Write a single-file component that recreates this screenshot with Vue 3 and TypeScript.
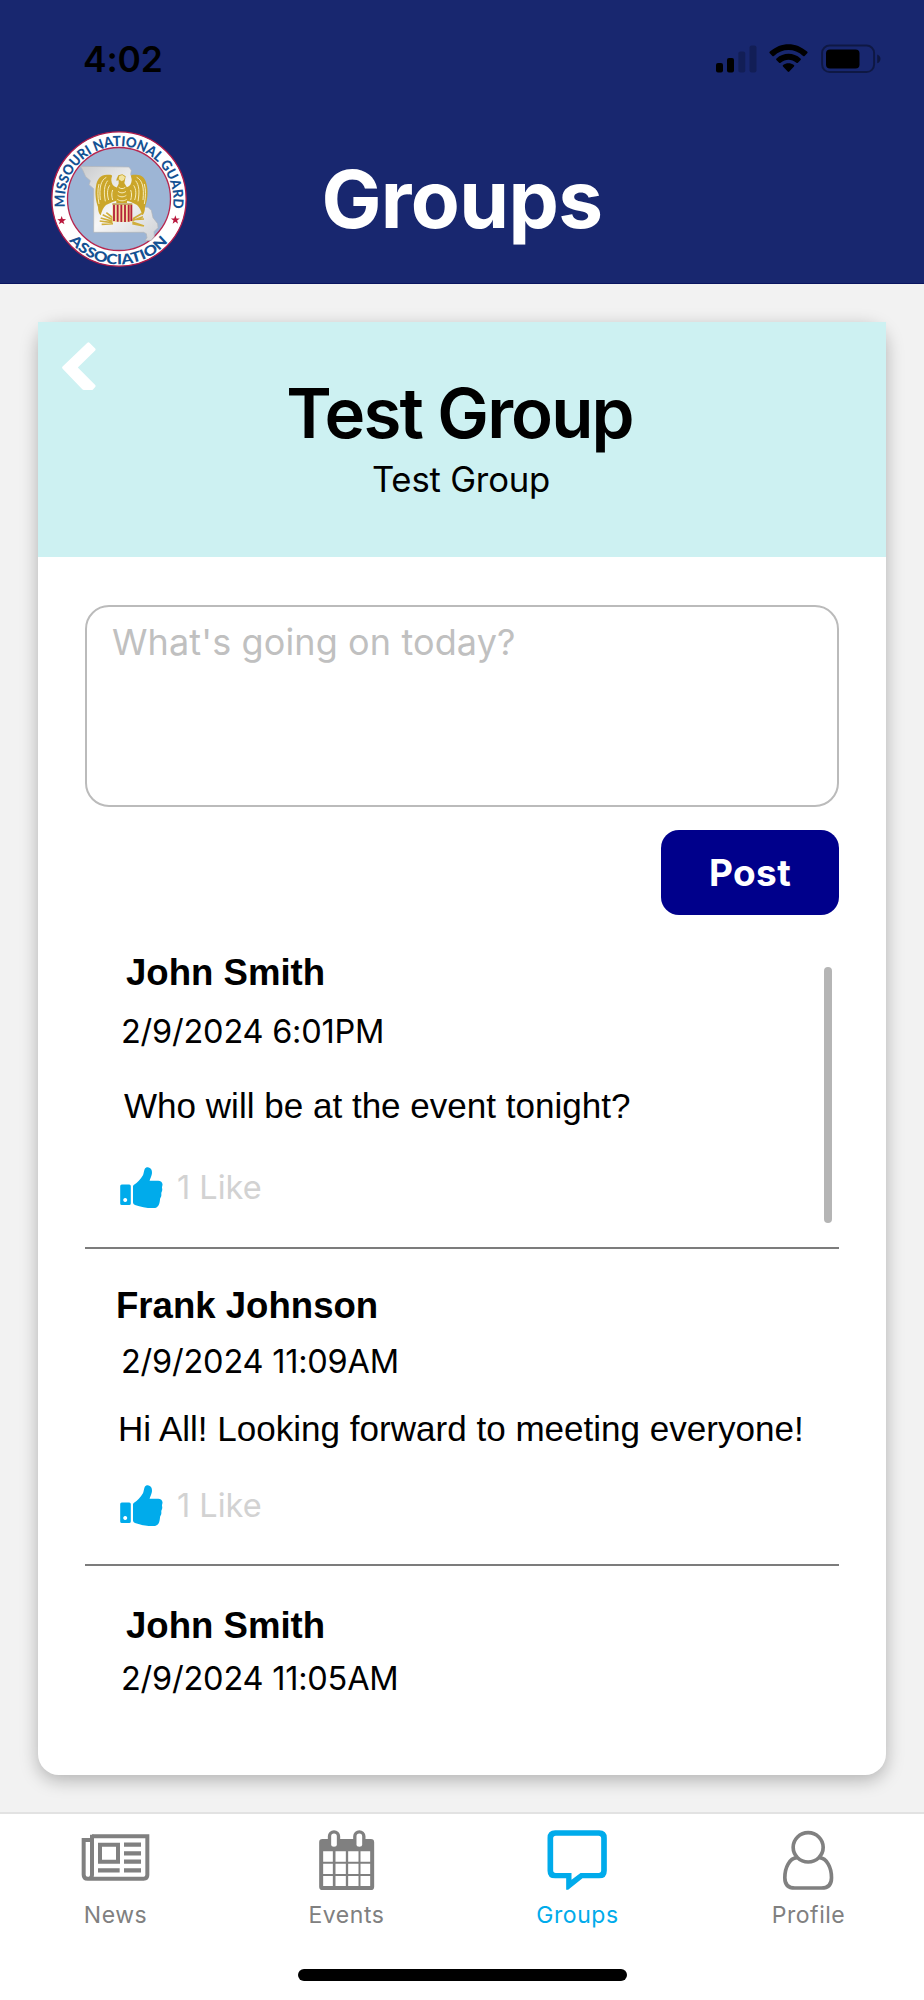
<script setup lang="ts">
import { ref } from 'vue'

interface Post {
	id: number
	author: string
	date: string
	message?: string
	likes?: number
}

const draft = ref<string>('')
const activeTab = ref<string>('Groups')

const posts = ref<Post[]>([
	{ id: 1, author: 'John Smith', date: '2/9/2024 6:01PM', message: 'Who will be at the event tonight?', likes: 1 },
	{ id: 2, author: 'Frank Johnson', date: '2/9/2024 11:09AM', message: 'Hi All! Looking forward to meeting everyone!', likes: 1 },
	{ id: 3, author: 'John Smith', date: '2/9/2024 11:05AM' },
])

const tabs = ['News', 'Events', 'Groups', 'Profile']
</script>

<template>
	<div class="screen">
		<header class="header">
			<div class="status-bar">
				<span class="time">4:02</span>
				<div class="status-icons">
					<svg class="signal" width="41" height="30" viewBox="0 0 41 30">
						<rect x="0" y="19" width="7" height="9.5" rx="2" />
						<rect x="11" y="14" width="7" height="14.5" rx="2" />
						<rect x="22.3" y="7.5" width="7" height="21" rx="2" opacity=".22" />
						<rect x="33.5" y="1.5" width="7" height="27" rx="2" opacity=".22" />
					</svg>
					<svg class="wifi" width="39" height="30" viewBox="0 0 39 30">
						<path d="M0.8 9.3Q0 8.4 .9 7.6C12-2.3 27-2.3 38.1 7.6q.9.8.1 1.7l-2.6 2.6q-.7.7-1.5 0C25.5 4 13.5 4 4.9 11.9q-.8.7-1.5 0z" />
						<path d="M7.4 16Q6.6 15.2 7.5 14.4C14.5 8.3 24.5 8.3 31.5 14.4q.9.8.1 1.6l-2.7 2.7q-.7.7-1.5 0C22.5 14.8 16.5 14.8 11.6 18.7q-.8.7-1.5 0z" />
						<path d="M14 22.6q-.8-.8.1-1.5c3.2-2.4 7.6-2.4 10.8 0q.9.7.1 1.5l-4.7 4.9q-.8.8-1.6 0z" />
					</svg>
					<svg class="battery" width="60" height="30" viewBox="0 0 60 30">
						<rect x="1.1" y="1.6" width="52" height="26.5" rx="7.5" fill="none" stroke="#000" stroke-width="2" opacity=".38" />
						<rect x="5" y="5.4" width="33.5" height="19" rx="4" />
						<path d="M56.2 10.6c4.4 1.2 4.4 7.4 0 8.6z" opacity=".42" />
					</svg>
				</div>
			</div>
			<div class="title-bar">
				<svg class="logo" width="138" height="138" viewBox="31 28 414 414">
					<defs>
						<path id="arc-top" d="M76.3 260A163 163 0 1 1 399.700 260" />
						<path id="arc-bottom" d="M88 360A194 194 0 0 0 388 360" />
						<linearGradient id="state" x1="0" y1="0" x2="1" y2="1">
							<stop offset="0" stop-color="#c9cbcd" />
							<stop offset=".5" stop-color="#f7f7f7" />
							<stop offset="1" stop-color="#cfd2d6" />
						</linearGradient>
					</defs>
					<circle cx="238" cy="235" r="201.5" fill="#fff" stroke="#b01c4a" stroke-width="4" />
					<circle cx="238" cy="235" r="154.5" fill="#9db5d5" stroke="#b5264f" stroke-width="4" />
					<text class="logo-text"><textPath href="#arc-top" textLength="556" lengthAdjust="spacingAndGlyphs">MISSOURI NATIONAL GUARD</textPath></text>
					<text class="logo-text"><textPath href="#arc-bottom" textLength="338" lengthAdjust="spacingAndGlyphs">ASSOCIATION</textPath></text>
					<g fill="#b8173c">
						<path d="M66 286l3.300 9.300 9.900.3-7.900 6 2.900 9.500-8.200-5.700-8.200 5.700 2.900-9.500-7.900-6 9.900-.3z" />
						<path d="M407 284l3.300 9.300 9.900.3-7.900 6 2.900 9.500-8.200-5.700-8.200 5.700 2.900-9.500-7.900-6 9.900-.3z" />
					</g>
					<!-- state outline -->
					<path d="M122 137L268 139l7 10-2 12 8 22 12 50 15 26 17 1 10 9 5 22 14 18 1 12-12 12 1 14-9 12-19 1 6-9-2-12-8-4H162V204l-14-12 4-12-14-12-8-18z" fill="url(#state)" stroke="#b0b4b8" stroke-width="2" />
					<!-- eagle -->
					<g fill="#cba62a">
						<path d="M204 162c-20-1-32 12-35 35-4 22 0 46 6 62 0 12 3 20 8 25 4-14 8-24 16-31l20-9 18-6 3-28c-5-12-16-10-21-18-5-9-5-17-2-25 2-5-5-5-13-5z" />
						<path d="M288 162c20-1 31 12 34 35 4 22 0 46-6 62 0 12-3 20-8 25-4-14-8-24-16-31l-18-9-20-6-3-28c5-12 16-10 21-18 5-9 5-17 2-25-2-5 6-5 14-5z" />
						<path d="M231 174l5-10 12-3 10 6-2 11-2 9 12 20-4 40h-32l-2-40 9-18v-10l-7 1z" />
					</g>
					<g fill="none" stroke="#f6ecbc" stroke-width="3">
						<path d="M200 170c-16 8-22 30-18 68M204 180c-11 14-12 35-7 62M210 194c-8 12-8 28-3 44M178 190c-5 18-4 38 0 60M291 170c17 8 23 30 19 68M288 180c11 14 12 35 7 62M282 194c8 12 8 28 3 44M314 190c5 18 4 38 0 60M219 208c-4 10-3 20 0 30M273 208c4 10 3 20 0 30" />
						<path d="M237 200c6 5 14 5 20 0M235 212c7 6 17 6 24 0M234 224c8 6 18 6 26 0M233 236c8 6 20 6 28 0" />
					</g>
					<path d="M239 166l9-3 8 6-3 9-7 4-9-6z" fill="#f1e3a0" />
					<g fill="none" stroke="#d0ae3c" stroke-width="5">
						<path d="M183 292l36 10M180 301l38 5M186 311l34-2M189 282l32 16M278 304l35 12M278 309l30 6M278 300l32-12M280 294l28-16M200 276l20 16M277 297l36-2" />
					</g>
					<rect x="218" y="249" width="60" height="55" rx="4" fill="#f4e0a4" />
					<path d="M223 252v49M234 252v51M245 252v52M256 252v52M267 252v51M275 252v49" stroke="#b5213a" stroke-width="5.5" />
					<path d="M218 250h60" stroke="#9a7726" stroke-width="3" />
				</svg>
				<h1 class="title">Groups</h1>
			</div>
		</header>

		<main class="card">
			<div class="group-header">
				<button class="back" aria-label="Back">
					<svg width="34" height="49" viewBox="0 0 34 49">
						<path d="M25.4 .8Q26.4-.2 27.4 .8L33.2 6.5Q34 7.3 33.2 8.4L15.8 25.4 33.2 43Q34 44 33.2 45L31 47.5Q30.4 48 29.5 48H22Q21 48 20.3 47.2L.6 26.8Q-.4 25.5 .6 24.4Z" fill="#fff" />
					</svg>
				</button>
				<h2 class="group-name">Test Group</h2>
				<p class="group-description">Test Group</p>
			</div>

			<div class="group-body">
				<textarea v-model="draft" class="composer" placeholder="What's going on today?"></textarea>
				<button class="post-button">Post</button>

				<div class="posts">
					<article v-for="post in posts" :key="post.id" class="post">
						<h3 class="author">{{ post.author }}</h3>
						<p class="date">{{ post.date }}</p>
						<p v-if="post.message" class="message">{{ post.message }}</p>
						<div v-if="post.likes" class="likes">
							<svg width="43" height="42" viewBox="0 0 43 42">
								<path d="M1.8 17.5h7.4q1.600 0 1.600 1.600v17.400q0 1.600-1.600 1.600H1.800Q.2 38.100.2 36.500V19.100q0-1.600 1.600-1.600zM5.200 31a2 2 0 1 0 .01 0z" fill="#00abeb" fill-rule="evenodd" />
								<path d="M13 19.500q0-1.200 1-1.700C17.500 16 20.500 12 22.800 8.500c.9-1.500 1-4.600 1.900-6.600C25.600.2 28-.1 29.800.9c2 1.100 2.500 3.700 2 6.300-.5 2.500-1.700 4.300-2.200 6.600h8.600c2.600 0 4.600 2 4.300 4.200-.2 1.300-.8 2-.4 3.200.5 1.900-.3 3.200-.7 4.400-.3 1.200.2 2.200-.2 3.600-.3 1.300-1.100 1.900-1.200 3.200C39.600 37 38.500 41 33.500 41.100c-7 .1-12.500-1-18.500-3.100q-2-.7-2-2.500z" fill="#00abeb" />
							</svg>
							<span>{{ post.likes }} Like</span>
						</div>
					</article>
					<div class="scrollbar"></div>
				</div>
			</div>
		</main>

		<nav class="tab-bar">
			<div class="tabs">
				<button v-for="tab in tabs" :key="tab" class="tab" :class="{ active: tab === activeTab }" @click="activeTab = tab">
					<svg v-if="tab === 'News'" width="72" height="60" viewBox="60 62 216 180">
						<path d="M96 81H262V197Q262 208 251 208H83Q71 208 71 196V92H96" fill="none" stroke="currentColor" stroke-width="12" />
						<path d="M96 76V196Q96 204 90 207" fill="none" stroke="currentColor" stroke-width="12" />
						<path d="M120 106H174V157H120z" fill="none" stroke="currentColor" stroke-width="12" />
						<path d="M192 106h51M192 132h51M192 157h51M192 183h51M114 183h65" stroke="currentColor" stroke-width="13" />
					</svg>
					<svg v-else-if="tab === 'Events'" width="72" height="60" viewBox="752.5 60 216 180">
						<path d="M787 87H803V79A18.5 18.5 0 0 1 840 79V87H879V79A18.5 18.5 0 0 1 916 79V87H932Q942 87 942 97V230Q942 240 932 240H787Q777 240 777 230V97Q777 87 787 87z" fill="currentColor" />
						<path d="M813 79a8.5 8.5 0 0 1 17 0v26a8.5 5 0 0 1-17 0zM889 79a8.5 8.5 0 0 1 17 0v26a8.5 5 0 0 1-17 0z" fill="#fff" />
						<path d="M789 124h29v31h-29zM826 124h31v31h-31zM864 124h31v31h-31zM901 124h29v31h-29zM789 161h29v31h-29zM826 161h31v31h-31zM864 161h31v31h-31zM901 161h29v31h-29zM789 198h29v30h-29zM826 198h31v30h-31zM864 198h31v30h-31zM901 198h29v30h-29z" fill="#fff" />
					</svg>
					<svg v-else-if="tab === 'Groups'" width="72" height="60" viewBox="125.5 60 216 180">
						<path d="M165 61H297Q320 61 320 84V182Q320 205 297 205H247L204 239H198V205H165Q142 205 142 182V84Q142 61 165 61zM167 77Q159 77 159 85V181Q159 189 167 189H214V209L241 189H295Q303 189 303 181V85Q303 77 295 77z" fill="currentColor" fill-rule="evenodd" />
					</svg>
					<svg v-else width="72" height="60" viewBox="818.5 60 216 180">
						<ellipse cx="924" cy="112" rx="45" ry="44" fill="none" stroke="currentColor" stroke-width="11" />
						<path d="M890 143C868 145 854 172 854 203Q854 234 884 234H964Q994 234 994 203C994 172 980 145 958 143" fill="none" stroke="currentColor" stroke-width="11" />
					</svg>
					<span class="tab-label">{{ tab }}</span>
				</button>
			</div>
			<div class="home-indicator"></div>
		</nav>
	</div>
</template>

<style>
body {
	margin: 0;
	background-color: #f2f2f2;
}
</style>

<style scoped>
.screen {
	display: flex;
	flex-direction: column;
	width: 924px;
	height: 2000px;
	overflow: hidden;
	background-color: #f2f2f2;
	font-family: Inter, "Liberation Sans", sans-serif;
	color: #000;
}

h1, h2, h3, p {
	margin: 0;
}

button {
	border: none;
	padding: 0;
	background: none;
	font-family: inherit;
}

svg {
	display: block;
}

.header {
	box-sizing: border-box;
	height: 284px;
	background-color: #18276f;
	border-bottom: 1px solid #0a1560;
}

.status-bar {
	display: flex;
	align-items: center;
	justify-content: space-between;
	height: 118px;
	padding: 0 43px 0 83px;
}

.time {
	font-size: 35.5px;
	font-weight: 600;
	letter-spacing: -0.2px;
}

.status-icons {
	display: flex;
	align-items: center;
}

.wifi {
	margin: 0 13px 0 12px;
}

.title-bar {
	display: grid;
	grid-template-columns: 1fr auto 1fr;
	align-items: center;
	height: 162px;
}

.logo {
	margin-left: 50px;
}

.logo-text {
	fill: #145193;
	font-family: Lato, sans-serif;
	font-size: 42px;
	font-weight: 900;
}

.title {
	color: #fff;
	font-size: 80px;
	font-weight: 700;
	line-height: 96px;
	letter-spacing: -0.6px;
}

.card {
	box-sizing: border-box;
	height: 1453px;
	margin: 38px 38px 37px;
	background-color: #fff;
	border-radius: 21px;
	box-shadow: 0 5px 18px rgba(0, 0, 0, 0.27);
}

.group-header {
	position: relative;
	box-sizing: border-box;
	height: 235px;
	padding-top: 49px;
	background-color: #cdf1f2;
	text-align: center;
}

.back {
	position: absolute;
	top: 20px;
	left: 24px;
}

.group-name {
	padding-right: 5px;
	font-size: 69px;
	font-weight: 600;
	line-height: 84px;
	letter-spacing: -1.9px;
}

.group-description {
	margin-top: 3px;
	padding-right: 2px;
	font-size: 34.7px;
	line-height: 42px;
	letter-spacing: -0.2px;
}

.group-body {
	display: flex;
	flex-direction: column;
	padding: 48px 47px 0;
}

.composer {
	box-sizing: border-box;
	height: 202px;
	padding: 13px 25px;
	border: 2px solid #bbb;
	border-radius: 24px;
	background-color: #fff;
	font-family: inherit;
	font-size: 36px;
	line-height: 44px;
	letter-spacing: 0.12px;
	resize: none;
	outline: none;
}

.composer::placeholder {
	color: #c0c0c0;
	opacity: 1;
}

.post-button {
	align-self: flex-end;
	width: 178px;
	height: 85px;
	margin-top: 23px;
	border-radius: 18px;
	background-color: #00008b;
	color: #fff;
	font-size: 37px;
	font-weight: 700;
	letter-spacing: 0.4px;
}

.posts {
	position: relative;
	margin-top: 25px;
}

.post {
	padding: 36px 0 37px 36px;
	border-bottom: 2px solid #7c7c7c;
}

.post:first-child {
	padding-top: 12px;
	padding-bottom: 38px;
}

.post:nth-child(3) {
	padding-top: 39px;
	border-bottom: none;
}

.author {
	margin-left: 5px;
	font-family: "Liberation Sans", sans-serif;
	font-size: 36.6px;
	font-weight: 700;
	line-height: 42px;
}

.date {
	margin-top: 18px;
	font-size: 32.5px;
	line-height: 40px;
	letter-spacing: -0.22px;
}

.message {
	margin: 33px 0 0 3px;
	font-family: "Liberation Sans", sans-serif;
	font-size: 35.05px;
	line-height: 42px;
}

.likes {
	display: flex;
	align-items: center;
	gap: 14px;
	height: 42px;
	margin: 40px 0 0 -1px;
	color: #d2d2d2;
	font-size: 32.5px;
	line-height: 40px;
}

.post:nth-child(2) .author {
	margin-left: -5px;
}

.post:nth-child(2) .date {
	margin-top: 15px;
}

.post:nth-child(2) .message {
	margin: 26px 0 0 -3px;
}

.post:nth-child(2) .likes {
	margin-top: 35px;
}

.post:nth-child(3) .date {
	margin-top: 12px;
}

.scrollbar {
	position: absolute;
	top: 27px;
	right: 7px;
	width: 8px;
	height: 256px;
	border-radius: 4px;
	background-color: #b5b5b5;
}

.tab-bar {
	box-sizing: border-box;
	height: 188px;
	border-top: 2px solid #e2e2e2;
	background-color: #fff;
}

.tabs {
	display: grid;
	grid-template-columns: repeat(4, 1fr);
	padding-top: 16px;
}

.tab {
	display: flex;
	flex-direction: column;
	align-items: center;
	gap: 10px;
	color: #808080;
}

.tab.active {
	color: #00abeb;
}

.tab-label {
	font-size: 23px;
	line-height: 30px;
	letter-spacing: 0.55px;
}

.home-indicator {
	width: 329px;
	height: 12px;
	margin: 39px auto 0;
	border-radius: 6px;
	background-color: #000;
}
</style>
